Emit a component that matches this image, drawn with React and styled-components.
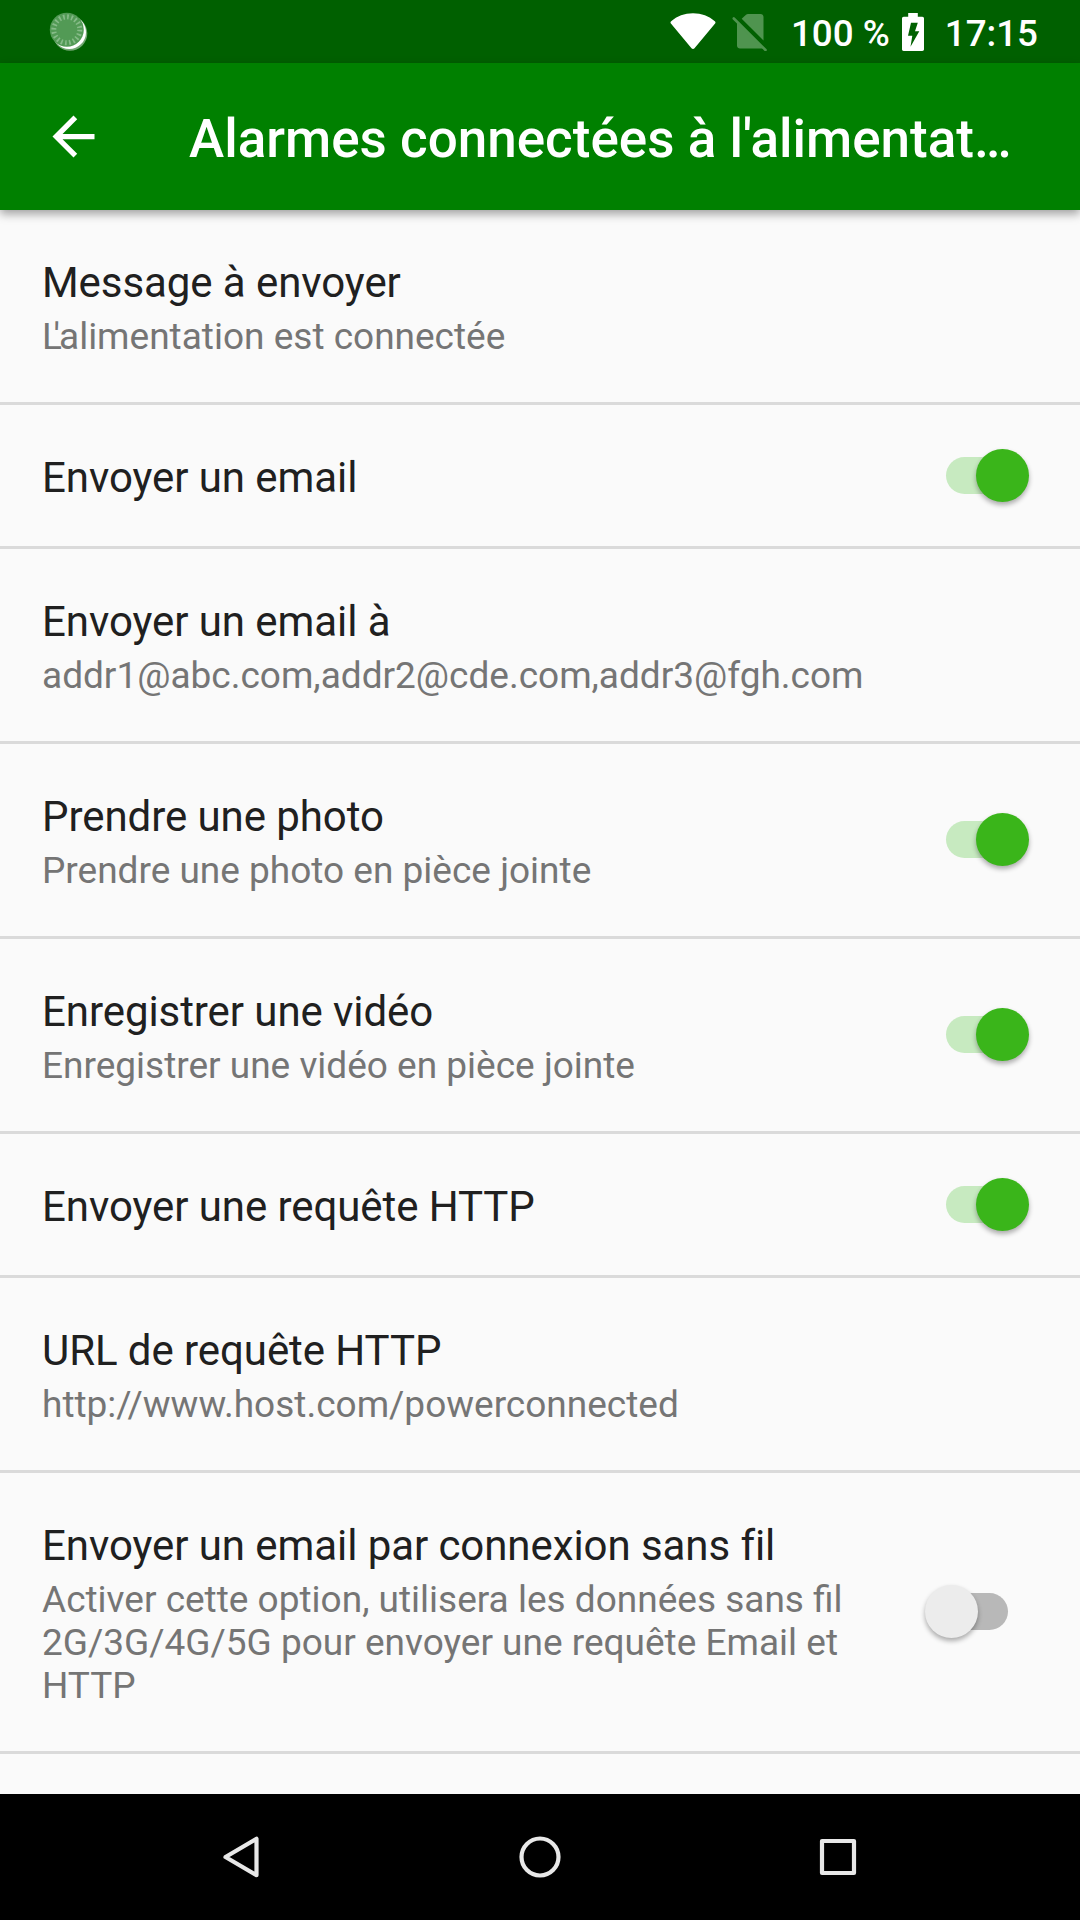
import styled, { createGlobalStyle } from "styled-components";

const settings = [
  { title: "Message à envoyer", summary: <><Kern>L</Kern>'alimentation est connectée</> },
  { title: "Envoyer un email", on: true },
  { title: "Envoyer un email à", summary: "addr1@abc.com,addr2@cde.com,addr3@fgh.com" },
  { title: "Prendre une photo", summary: "Prendre une photo en pièce jointe", on: true },
  { title: "Enregistrer une vidéo", summary: "Enregistrer une vidéo en pièce jointe", on: true },
  { title: "Envoyer une requête HTTP", on: true },
  { title: "URL de requête HTTP", summary: "http://www.host.com/powerconnected" },
  {
    title: "Envoyer un email par connexion sans fil",
    summary: "Activer cette option, utilisera les données sans fil 2G/3G/4G/5G pour envoyer une requête Email et HTTP",
    on: false,
  },
];

// pulls the apostrophe in over the foot of the L
function Kern({ children }) {
  return <Tight>{children}</Tight>;
}

function SyncIcon() {
  return (
    <svg width="40" height="40" viewBox="0 0 40 40">
      <circle cx="21" cy="21.5" r="17.3" fill="#fff" opacity="0.45" />
      <circle cx="20.2" cy="20.2" r="16.8" fill="#fff" />
      <circle cx="17.8" cy="17.8" r="17" fill="#529a55" />
      <circle cx="17.8" cy="17.8" r="13" fill="none" stroke="#86bb88" strokeWidth="5" strokeDasharray="1.7 2.38" />
    </svg>
  );
}

function WifiIcon() {
  return (
    <svg width="46" height="38" viewBox="0 0 46 38">
      <path
        d="M1.2 8.2C7 3 14.5 0.2 23 0.2s16 2.8 21.8 8c.8.8.9 1.5.3 2.3L24.5 35.2c-.9 1.1-2.1 1.1-3 0L.9 10.5C.3 9.7.4 9 1.2 8.2z"
        fill="#fff"
      />
    </svg>
  );
}

function NoSimIcon() {
  return (
    <svg width="36" height="38" viewBox="0 0 36 38">
      <g fill="#4f944f">
        <path d="M9.7 5.8L14 1.7C14.6 1.2 15.2 1 16 1h12.5c1.7 0 3 1.3 3 3v23.6z" />
        <path d="M5 8L32.5 35.5H8c-1.7 0-3-1.3-3-3z" />
        <path d="M1.8 5.5L33.5 37" stroke="#4f944f" strokeWidth="2.6" strokeLinecap="round" />
      </g>
    </svg>
  );
}

function BatteryIcon() {
  return (
    <svg width="22" height="38" viewBox="0 0 22 38">
      <path
        fillRule="evenodd"
        d="M6.2 0h9.6v3.8h4.5c1 0 1.7.7 1.7 1.7v30.8c0 1-.7 1.7-1.7 1.7H1.7C.7 38 0 37.3 0 36.3V5.5c0-1 .7-1.7 1.7-1.7h4.5zM9 9.8H15.8L13 18.2h4.3L8.5 33.8L10.3 22.8H6z"
        fill="#fff"
      />
    </svg>
  );
}

function BackArrow() {
  return (
    <svg width="63" height="63" viewBox="0 0 24 24">
      <path d="M20 11H7.83l5.59-5.59L12 4l-8 8 8 8 1.41-1.41L7.83 13H20v-2z" fill="#fff" />
    </svg>
  );
}

export default function App() {
  return (
    <Screen>
      <GlobalStyle />
      <StatusBar>
        <SyncIcon />
        <StatusRight>
          <WifiIcon />
          <NoSimIcon />
          <Battery>
            <span>100 %</span>
            <BatteryIcon />
          </Battery>
          <span>17:15</span>
        </StatusRight>
      </StatusBar>
      <AppBar>
        <BackArrow />
        <h1>Alarmes connectées à l'alimentat…</h1>
      </AppBar>
      <List>
        {settings.map((s) => (
          <Row key={s.title}>
            <Texts>
              <Title>{s.title}</Title>
              {s.summary && <Summary>{s.summary}</Summary>}
            </Texts>
            {s.on !== undefined && (
              <Track $on={s.on}>
                <Thumb $on={s.on} />
              </Track>
            )}
          </Row>
        ))}
      </List>
      <NavBar>
        <svg width="44" height="44" viewBox="0 0 44 44">
          <path d="M36.5 3.8v36.4L5.500 22z" />
        </svg>
        <svg width="44" height="44" viewBox="0 0 44 44">
          <circle cx="22" cy="22" r="18.5" />
        </svg>
        <svg width="44" height="44" viewBox="0 0 44 44">
          <rect x="6" y="6" width="32" height="32" />
        </svg>
      </NavBar>
    </Screen>
  );
}

const GlobalStyle = createGlobalStyle`
  body {
    margin: 0;
    font-family: Roboto, "Noto Sans", sans-serif;
  }

  svg {
    display: block;
    flex-shrink: 0;
  }
`;

const Screen = styled.div`
  width: 1080px;
  height: 1920px;
  display: flex;
  flex-direction: column;
  overflow: hidden;
  background-color: #fafafa;
`;

const StatusBar = styled.header`
  height: 63px;
  box-sizing: border-box;
  padding: 0 42px 0 49px;
  display: flex;
  justify-content: space-between;
  align-items: center;
  flex-shrink: 0;
  background-color: #006000;
  color: white;
  font-size: 36.75px;
  font-weight: 500;
`;

const StatusRight = styled.div`
  display: flex;
  align-items: center;
  gap: 16px;

  span {
    line-height: 43px;
    margin-top: 3px;
  }
`;

const Battery = styled.div`
  display: flex;
  align-items: center;
  gap: 12px;
  margin: 0 5px 0 7px;
`;

const AppBar = styled.div`
  height: 147px;
  box-sizing: border-box;
  padding: 0 42px;
  display: flex;
  align-items: center;
  flex-shrink: 0;
  gap: 84px;
  background-color: #008000;
  box-shadow: 0 4px 9px rgba(0, 0, 0, 0.36);
  z-index: 1;

  h1 {
    margin: 4px 0 0;
    color: white;
    font-size: 53px;
    font-weight: 500;
    line-height: 62px;
    white-space: nowrap;
  }
`;

const List = styled.main`
  flex: 1;
  min-height: 0;
  overflow: hidden;
`;

const Row = styled.div`
  display: flex;
  align-items: center;
  justify-content: space-between;
  padding: 0 72px 0 42px;
  border-bottom: 3px solid #dadada;
`;

const Texts = styled.div`
  width: 842px;
  padding: 44px 0 40px;
`;

const Title = styled.div`
  color: #202020;
  font-size: 42px;
  letter-spacing: -0.07px;
  font-variant-ligatures: common-ligatures;
  line-height: 57px;
`;

const Summary = styled.div`
  margin: 4px 0;
  color: #757575;
  font-size: 37px;
  line-height: 43px;
`;

const Tight = styled.span`
  letter-spacing: -8.5px;
`;

const Track = styled.div`
  position: relative;
  width: 62px;
  height: 37px;
  margin-bottom: 1px;
  border-radius: 19px;
  background-color: ${(p) => (p.$on ? "#c7eac0" : "#b8b8b8")};
`;

const Thumb = styled.div`
  position: absolute;
  top: -8px;
  left: ${(p) => (p.$on ? 30 : -21)}px;
  width: 53px;
  height: 53px;
  border-radius: 50%;
  background-color: ${(p) => (p.$on ? "#3ab51a" : "#ececec")};
  box-shadow: 0 3px 5px rgba(0, 0, 0, 0.32);
`;

const NavBar = styled.nav`
  height: 126px;
  flex-shrink: 0;
  display: flex;
  align-items: center;
  justify-content: center;
  gap: 254px;
  background-color: black;

  svg {
    fill: none;
    stroke: #e8e8e8;
    stroke-width: 4.2;
    stroke-linejoin: round;
  }
`;
